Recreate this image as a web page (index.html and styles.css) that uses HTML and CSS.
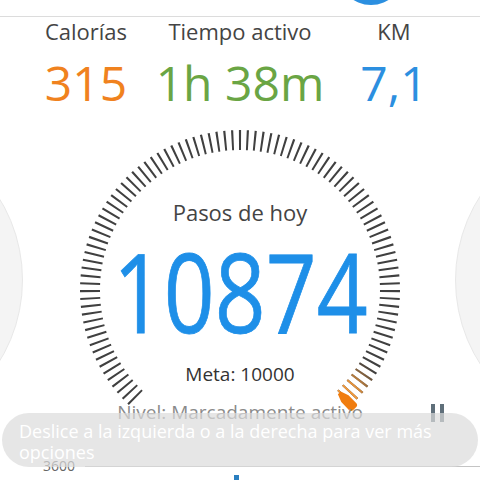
FILE: index.html
```html
<!DOCTYPE html>
<html lang="es">
<head>
    <meta charset="UTF-8">
    <meta name="viewport" content="width=device-width, initial-scale=1.0">
    <title>Podómetro</title>
    <link rel="stylesheet" href="styles.css">
</head>
<body>

<div id="app">
    <div class="side-page side-left"></div>
    <div class="side-page side-right"></div>

    <div class="topbar">
        <span class="tab-dot"></span>
    </div>

    <div class="stats">
        <div class="stat">
            <div class="stat-label">Calorías</div>
            <div class="stat-value cal">315</div>
        </div>
        <div class="stat">
            <div class="stat-label">Tiempo activo</div>
            <div class="stat-value time">1h 38m</div>
        </div>
        <div class="stat">
            <div class="stat-label">KM</div>
            <div class="stat-value km">7,1</div>
        </div>
    </div>

    <div class="gauge">
        <svg class="ring" width="320" height="320" viewBox="0 0 320 320">
            <defs>
                <radialGradient id="endGlow" gradientUnits="userSpaceOnUse" cx="262" cy="266" r="40">
                    <stop offset="0" stop-color="#fff"/>
                    <stop offset="0.35" stop-color="#fff"/>
                    <stop offset="1" stop-color="#000"/>
                </radialGradient>
                <mask id="endMask">
                    <rect width="320" height="320" fill="url(#endGlow)"/>
                </mask>
            </defs>
            <!-- 97 ticks along a 272 degree arc -->
            <path class="ticks" d="M 55.8 267.9 A 150 150 0 1 1 264.2 267.9" pathLength="96.28"/>
            <path class="ticks ticks-done" d="M 55.8 267.9 A 150 150 0 1 1 264.2 267.9" pathLength="96.28" mask="url(#endMask)"/>
            <path class="marker" transform="rotate(136 160 160)"
                  d="M 155 -2 Q 155 -5 158 -5 L 162 -5 Q 165 -5 165 -2 L 165 9 L 162 17 L 158 17 L 155 9 Z"/>
        </svg>

        <div class="gauge-text">
            <div class="today">Pasos de hoy</div>
            <div class="steps">10874</div>
            <div class="goal">Meta: 10000</div>
            <div class="level-row">
                <span class="level">Nivel: Marcadamente activo</span>
                <span class="pause"><i></i><i></i></span>
            </div>
        </div>
    </div>

    <div class="chart">
        <div class="chart-axis">
            <span class="axis-label">3600</span>
            <span class="axis-line"></span>
        </div>
        <div class="chart-bars">
            <span class="bar"></span>
        </div>
    </div>

    <div class="toast">Deslice a la izquierda o a la derecha para ver más opciones</div>
</div>

</body>
</html>
```

FILE: styles.css
```css
body {
    font-family: 'Open Sans', 'Noto Sans', sans-serif;
    margin: 0;
    padding: 0;
    background-color: #fff;
}

#app {
    position: relative;
    width: 480px;
    height: 480px;
    overflow: hidden;
}

/* neighbouring pages of the carousel peeking in */
.side-page {
    position: absolute;
    top: 124px;
    width: 312px;
    height: 312px;
    border-radius: 50%;
    background-color: #f4f4f4;
    border: 1px solid #e8e8e8;
    box-sizing: border-box;
}

.side-left {
    left: -289px;
}

.side-right {
    left: 455px;
}

.topbar {
    position: relative;
    height: 16px;
    border-bottom: 1px solid #dcdcdc;
}

.tab-dot {
    position: absolute;
    left: 338px;
    top: -61px;
    width: 66px;
    height: 66px;
    border-radius: 50%;
    background-color: #2b8fe0;
}

.stats {
    position: relative;
    display: grid;
    grid-template-columns: repeat(3, minmax(0, 1fr));
    padding: 0 9px;
}

.stat {
    display: flex;
    flex-direction: column;
    align-items: center;
    white-space: nowrap;
}

.stat-label {
    font-size: 22px;
    line-height: 28px;
    color: #444;
}

.stat-value {
    font-size: 48px;
    line-height: 56px;
    margin-top: 10px;
}

.cal {
    color: #f0821e;
}

.time {
    color: #6aa544;
}

.km {
    color: #2c8fe0;
}

.gauge {
    position: relative;
    display: grid;
    height: 320px;
    margin-top: 19px;
}

.ring,
.gauge-text {
    grid-area: 1 / 1;
}

.ring {
    justify-self: center;
}

.ticks {
    fill: none;
    stroke: #404040;
    stroke-width: 20;
    stroke-dasharray: 0.28 0.72;
}

.ticks-done {
    stroke: #f39a3c;
}

.marker {
    fill: #f07d10;
}

.gauge-text {
    display: flex;
    flex-direction: column;
    align-items: center;
    padding-top: 68px;
}

.today {
    font-size: 22px;
    line-height: 28px;
    color: #444;
}

.steps {
    font-size: 110px;
    line-height: 100px;
    margin-top: 14px;
    color: #1e8fe8;
    -webkit-text-stroke: 0.8px #1e8fe8;
    transform: scaleX(0.81);
}

.goal {
    font-size: 19px;
    line-height: 24px;
    margin-top: 22px;
    color: #333;
}

.level-row {
    position: relative;
    align-self: stretch;
    display: flex;
    justify-content: center;
    margin-top: 13px;
}

.level {
    font-size: 19px;
    line-height: 26px;
    color: #8a8a8a;
}

.pause {
    position: absolute;
    right: 36px;
    top: 5px;
    display: flex;
    gap: 5px;
}

.pause i {
    width: 4px;
    height: 18px;
    background-color: #5f6f7a;
}

.chart {
    position: relative;
    margin-top: 9px;
}

.chart-axis {
    display: flex;
    align-items: center;
}

.axis-label {
    width: 76px;
    box-sizing: border-box;
    text-align: right;
    padding-right: 1px;
    margin-right: 9px;
    font-size: 14px;
    line-height: 14px;
    color: #666;
}

.axis-line {
    flex: 1;
    height: 1px;
    background-color: #c4c4c4;
}

.chart-bars {
    display: flex;
    padding-left: 234px;
    padding-top: 2px;
}

.bar {
    width: 5px;
    height: 10px;
    background-color: #2a7fc0;
}

.toast {
    position: absolute;
    left: 2px;
    right: 2px;
    top: 413px;
    height: 54px;
    box-sizing: border-box;
    padding: 8px 17px;
    border-radius: 27px;
    background-color: rgba(219, 219, 219, 0.7);
    color: #fff;
    font-size: 18px;
    line-height: 21px;
}
```
